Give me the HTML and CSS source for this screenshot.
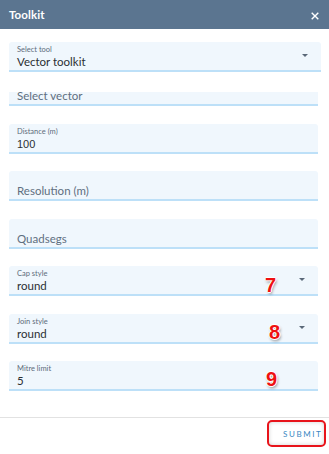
FILE: index.html
```html
<!DOCTYPE html>
<html>
<head>
<meta charset="utf-8">
<link rel="stylesheet" href="styles.css">
</head>
<body>
<div class="dialog">
  <div class="header">
    <span class="title">Toolkit</span>
    <svg class="close" width="8" height="8" viewBox="0 0 8 8"><path d="M0.7 0.7L7.3 7.3M7.3 0.7L0.7 7.3" stroke="#fff" stroke-width="1.4"/></svg>
  </div>
  <div class="top">
    <div class="field">
      <div class="body">
        <div class="label">Select tool</div>
        <div class="value">Vector toolkit</div>
      </div>
      <span class="caret"></span>
    </div>
  </div>
  <div class="scroll">
    <div class="list">
      <div class="field">
        <div class="body"><div class="placeholder">Select vector</div></div>
      </div>
      <div class="field">
        <div class="body">
          <div class="label">Distance (m)</div>
          <div class="value num">100</div>
        </div>
      </div>
      <div class="field">
        <div class="body"><div class="placeholder">Resolution (m)</div></div>
      </div>
      <div class="field">
        <div class="body"><div class="placeholder">Quadsegs</div></div>
      </div>
      <div class="field">
        <div class="body">
          <div class="label">Cap style</div>
          <div class="value">round</div>
        </div>
        <span class="caret"></span>
        <span class="mark m7">7</span>
      </div>
      <div class="field">
        <div class="body">
          <div class="label">Join style</div>
          <div class="value">round</div>
        </div>
        <span class="caret"></span>
        <span class="mark m8">8</span>
      </div>
      <div class="field">
        <div class="body">
          <div class="label">Mitre limit</div>
          <div class="value">5</div>
        </div>
        <span class="mark m9">9</span>
      </div>
    </div>
  </div>
  <div class="footer">
    <button class="submit">SUBMIT</button>
  </div>
</div>
</body>
</html>
```
FILE: styles.css
```css
html, body {
  margin: 0;
  padding: 0;
  background: #fff;
}
body {
  width: 329px;
  height: 454px;
  overflow: hidden;
  font-family: "Lato", "Open Sans", sans-serif;
}
.dialog {
  display: flex;
  flex-direction: column;
  height: 454px;
}
.header {
  height: 29px;
  flex: none;
  background: #5b7590;
  display: flex;
  align-items: center;
  justify-content: space-between;
  padding: 0 10px 0 9px;
}
.title {
  color: #fff;
  font-weight: bold;
  font-size: 11.5px;
  letter-spacing: 0.1px;
}
.close {
  display: block;
  margin-top: 2px;
}
.top {
  padding: 13px 8px 0 9px;
  flex: none;
}
.scroll {
  margin-top: 20px;
  height: 325px;
  overflow: hidden;
  padding: 0 11px 0 9px;
  flex: none;
}
.list {
  margin-top: -16px;
  display: flex;
  flex-direction: column;
  gap: 17.5px;
}
.field {
  position: relative;
  display: flex;
  height: 28px;
  background: #f0f7fd;
  border-bottom: 2px solid #bde0f8;
  border-radius: 3px 3px 0 0;
  padding: 0 8px;
}
.body {
  flex: 1;
  padding-top: 3px;
}
.label {
  font-size: 7.5px;
  line-height: 10px;
  color: #5d6c7b;
}
.value {
  font-size: 11.5px;
  line-height: 14px;
  color: #2b2f33;
}
.value.num {
  font-family: "Liberation Sans", Arial, sans-serif;
  font-size: 11px;
}
.placeholder {
  padding-top: 10px;
  font-size: 11.5px;
  line-height: 14px;
  color: #5f6f80;
}
.caret {
  width: 0;
  height: 0;
  margin: 12px 5px 0 0;
  border-left: 3px solid transparent;
  border-right: 3px solid transparent;
  border-top: 3px solid #5a6878;
}
.mark {
  position: absolute;
  font-family: "Liberation Sans", Arial, sans-serif;
  font-weight: bold;
  font-size: 20px;
  line-height: 20px;
  color: #ee1111;
  text-shadow: 0 0 1px #fff, 0 0 1px #fff, 1px 0 0 #fff, -1px 0 0 #fff, 0 1px 0 #fff, 0 -1px 0 #fff, 1px 2px 3px rgba(0,0,0,0.45);
}
.m7 { left: 256px; top: 9px; }
.m8 { left: 260px; top: 8px; }
.m9 { left: 257px; top: 8px; }
.footer {
  margin-top: auto;
  border-top: 1px solid #e2e2e2;
  height: 35px;
  display: flex;
  justify-content: flex-end;
  align-items: flex-start;
  padding: 2px 3px 0 0;
}
.submit {
  width: 59px;
  height: 27px;
  border: 2px solid #e8141b;
  border-radius: 5px;
  background: #fff;
  box-shadow: inset 0 0 4px rgba(0,0,0,0.18);
  color: #3a87c2;
  font-family: "Lato", "Open Sans", sans-serif;
  font-size: 8px;
  letter-spacing: 1.6px;
  padding: 1px 0 0 14px;
  text-align: left;
  margin: 0;
}
```
